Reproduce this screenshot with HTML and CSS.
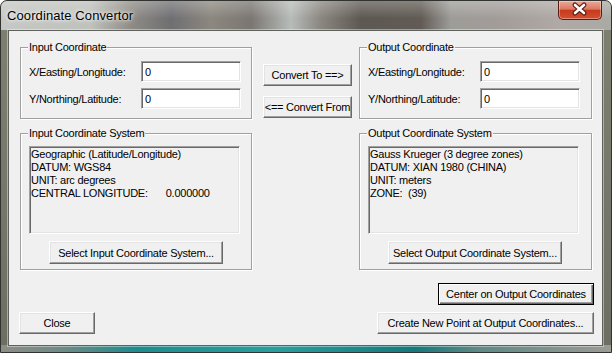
FILE: index.html
```html
<!DOCTYPE html>
<html lang="en">
<head>
    <meta charset="UTF-8">
    <title>Coordinate Convertor</title>
    <link rel="stylesheet" href="styles.css">
</head>
<body>
    <div class="window">
        <div class="titlebar">
            <span class="title">Coordinate Convertor</span>
            <button class="close-x" title="Close">
                <svg width="44" height="19" viewBox="0 0 44 19">
                    <path d="M17 5 L26 13 M26 5 L17 13" stroke="#5a1a12" stroke-width="5" stroke-linecap="round"/>
                    <path d="M17 5 L26 13 M26 5 L17 13" stroke="#fff" stroke-width="2.6" stroke-linecap="round"/>
                </svg>
            </button>
        </div>
        <div class="client">
            <div class="row-top">
                <div class="group coord-group">
                    <span class="group-title">Input Coordinate</span>
                    <div class="field"><label>X/Easting/Longitude:</label><input class="edit" value="0"></div>
                    <div class="field"><label>Y/Northing/Latitude:</label><input class="edit" value="0"></div>
                </div>
                <div class="convert-col">
                    <button class="btn">Convert To ==&gt;</button>
                    <button class="btn">&lt;== Convert From</button>
                </div>
                <div class="group coord-group out">
                    <span class="group-title">Output Coordinate</span>
                    <div class="field"><label>X/Easting/Longitude:</label><input class="edit" value="0"></div>
                    <div class="field"><label>Y/Northing/Latitude:</label><input class="edit" value="0"></div>
                </div>
            </div>
            <div class="row-sys">
                <div class="group sys-group">
                    <span class="group-title">Input Coordinate System</span>
                    <div class="sys-info">
                        <div>Geographic (Latitude/Longitude)</div>
                        <div>DATUM: WGS84</div>
                        <div>UNIT: arc degrees</div>
                        <div class="pair"><span>CENTRAL LONGITUDE:</span><span>0.000000</span></div>
                    </div>
                    <button class="btn sys-btn">Select Input Coordinate System...</button>
                </div>
                <div class="group sys-group out">
                    <span class="group-title">Output Coordinate System</span>
                    <div class="sys-info">
                        <div>Gauss Krueger (3 degree zones)</div>
                        <div>DATUM: XIAN 1980 (CHINA)</div>
                        <div>UNIT: meters</div>
                        <div>ZONE:&nbsp; (39)</div>
                    </div>
                    <button class="btn sys-btn">Select Output Coordinate System...</button>
                </div>
            </div>
            <div class="row-bottom">
                <button class="btn close-btn">Close</button>
                <div class="action-col">
                    <button class="btn default-btn">Center on Output Coordinates</button>
                    <button class="btn create-btn">Create New Point at Output Coordinates...</button>
                </div>
            </div>
        </div>
    </div>
</body>
</html>
```

FILE: styles.css
```css
/* dialog */
* {
    box-sizing: border-box;
}

body {
    margin: 0;
    font-family: "Liberation Sans", Arial, sans-serif;
    font-size: 11px;
    letter-spacing: -0.25px;
    color: #000;
}

.window {
    width: 612px;
    height: 353px;
    padding: 0 8px 6px 7px;
    border: 1px solid #30332f;
    border-radius: 7px 7px 0 0;
    display: flex;
    flex-direction: column;
    background:
        linear-gradient(to right, #8c8e86 0, #6f8a86 10%, #1e8c8e 22%, #2a9e9f 45%, #16797b 68%, #5f8985 78%, #9b9b94 100%) bottom / 100% 7px no-repeat,
        linear-gradient(to bottom, #7f816f 0, #75766a 60%, #6c6e62 100%);
}

.titlebar {
    height: 29px;
    margin: 0 -8px 0 -7px;
    padding-left: 6px;
    display: flex;
    align-items: center;
    border-radius: 6px 6px 0 0;
    background:
        linear-gradient(to bottom, rgba(255, 255, 255, 0.25), rgba(255, 255, 255, 0) 60%),
        linear-gradient(to right, #c5c8c4 0, #bfc1bb 90px, #8f8c86 130px, #6f6f72 170px, #8c877f 210px, #7a7671 250px, #b7bcb9 290px, #8a8680 320px, #5e5852 360px, #625b55 420px, #9d9c98 450px, #a39c99 500px, #b0a9a6 560px, #a9aaa5 612px);
}

.title {
    font-size: 13px;
    letter-spacing: 0.1px;
    text-shadow: 0 0 6px #fff, 0 0 3px #fff;
}

.close-x {
    margin-left: auto;
    margin-right: 9px;
    align-self: flex-start;
    width: 44px;
    height: 19px;
    padding: 0;
    border: 1px solid #5b1d12;
    border-top: none;
    border-radius: 0 0 5px 5px;
    background: linear-gradient(to bottom, #eaa998 0, #dc7862 45%, #c63a1f 52%, #d4502f 100%);
    box-shadow: inset 0 0 0 1px rgba(255, 255, 255, 0.35);
}

.close-x svg {
    display: block;
    margin: -1px 0 0 -1px;
}

.client {
    flex: 1;
    background: #f0f0f0;
    border: 1px solid #5f625c;
    box-shadow: 0 0 0 1px rgba(255, 255, 255, 0.4);
    padding: 16px 8px 0 11px;
    display: flex;
    flex-direction: column;
}

.group {
    position: relative;
    border: 1px solid #a0a0a0;
    box-shadow: inset 1px 1px 0 #fff, 1px 1px 0 #fff;
}

.group-title {
    position: absolute;
    top: -7px;
    left: 7px;
    padding: 0 1px;
    line-height: 13px;
    background: #f0f0f0;
    white-space: nowrap;
}

.row-top {
    display: flex;
    align-items: flex-start;
}

.coord-group {
    width: 232px;
    height: 72px;
    padding: 13px 0 0 8px;
    display: flex;
    flex-direction: column;
    gap: 6px;
}

.coord-group.out,
.sys-group.out {
    width: 233px;
}

.coord-group.out {
    margin-left: 7px;
}

.field {
    display: flex;
    align-items: center;
    height: 21px;
}

.field label {
    width: 112px;
}

.edit {
    width: 100px;
    height: 21px;
    margin: 0;
    padding: 0 0 0 3px;
    font: inherit;
    letter-spacing: inherit;
    background: #fff;
    border: 1px solid;
    border-color: #a0a0a0 #fff #fff #a0a0a0;
    box-shadow: inset 1px 1px 0 #696969, inset -1px -1px 0 #e3e3e3;
    outline: none;
}

.convert-col {
    width: 89px;
    margin-left: 11px;
    padding-top: 17px;
    display: flex;
    flex-direction: column;
    gap: 10px;
}

.btn {
    height: 22px;
    padding: 0;
    font: inherit;
    letter-spacing: inherit;
    white-space: nowrap;
    color: #000;
    background: #f0f0f0;
    border: 1px solid;
    border-color: #fff #696969 #696969 #fff;
    box-shadow: inset -1px -1px 0 #a0a0a0, inset 1px 1px 0 #e3e3e3;
}

.row-sys {
    display: flex;
    gap: 107px;
    margin-top: 14px;
}

.sys-group {
    width: 232px;
    height: 137px;
    padding: 12px 0 0 8px;
}

.sys-info {
    width: 211px;
    height: 88px;
    padding: 1px 1px;
    line-height: 13px;
    white-space: nowrap;
    border: 1px solid;
    border-color: #a0a0a0 #fff #fff #a0a0a0;
    box-shadow: inset 1px 1px 0 #696969, inset -1px -1px 0 #e3e3e3;
}

.pair {
    display: flex;
    gap: 18px;
}

.sys-btn {
    display: block;
    width: 174px;
    height: 23px;
    margin: 7px 0 0 20px;
}

.row-bottom {
    display: flex;
    justify-content: space-between;
    align-items: flex-end;
    margin-top: 13px;
}

.close-btn {
    width: 76px;
    margin-left: -1px;
}

.action-col {
    display: flex;
    flex-direction: column;
    align-items: flex-end;
    gap: 7px;
}

.default-btn {
    width: 156px;
    border: 1px solid #000;
    box-shadow: inset 1px 1px 0 #fff, inset -1px -1px 0 #696969, inset -2px -2px 0 #a0a0a0;
}

.create-btn {
    width: 217px;
}
```
